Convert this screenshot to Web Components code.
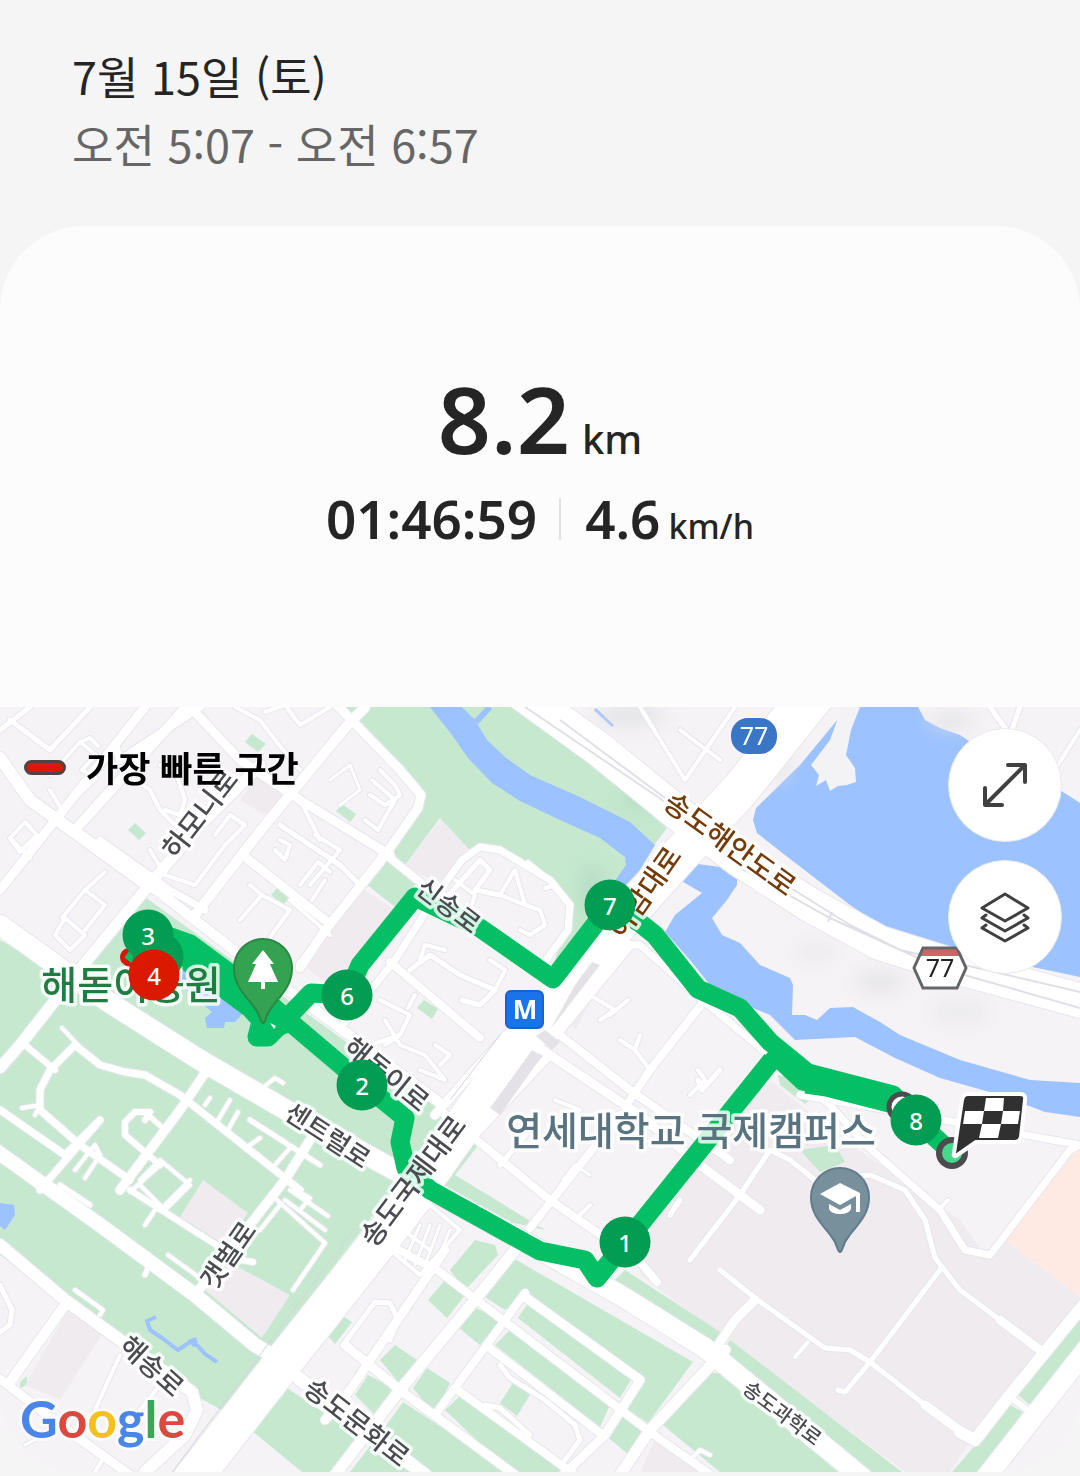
<!DOCTYPE html>
<html lang="ko">
<head>
<meta charset="utf-8">
<meta name="viewport" content="width=device-width, initial-scale=1">
<title>걷기 기록</title>
<style>
body{margin:0;background:#f5f5f5;color:#252525;font-family:"Noto Sans CJK KR","Noto Sans",sans-serif}
</style>
</head>
<body>
<workout-page>
  <workout-header slot="header">
    <span slot="date">7월 15일 (토)</span>
    <span slot="time">오전 5:07 - 오전 6:57</span>
  </workout-header>
  <workout-summary slot="summary">
    <unit-value slot="distance" size="large" unit="km">8.2</unit-value>
    <unit-value slot="stats">01:46:59</unit-value>
    <unit-value slot="stats" unit="km/h">4.6</unit-value>
  </workout-summary>
  <route-map slot="map">
    <map-pin x="263" y="1025" kind="park"></map-pin>
    <map-pin x="840" y="1254" kind="school"></map-pin>
    <km-marker x="158" y="957"></km-marker>
    <km-marker x="148" y="935">3</km-marker>
    <km-marker x="154" y="975" fastest>4</km-marker>
    <km-marker x="347" y="995">6</km-marker>
    <km-marker x="362" y="1085">2</km-marker>
    <km-marker x="610" y="905">7</km-marker>
    <km-marker x="625" y="1242">1</km-marker>
    <km-marker x="916" y="1120">8</km-marker>
    <map-legend slot="legend">가장 빠른 구간</map-legend>
    <round-button slot="controls" label="지도 확대" icon="expand"></round-button>
    <round-button slot="controls" label="지도 유형" icon="layers"></round-button>
    <google-logo slot="logo"></google-logo>
  </route-map>
</workout-page>

<script>
const define = (name, html, setup) => customElements.define(name, class extends HTMLElement {
  connectedCallback() {
    if (this.shadowRoot) return;
    const root = this.attachShadow({ mode: 'open' });
    root.innerHTML = typeof html === 'function' ? html(this) : html;
    if (setup) setup(this, root);
  }
});

define('workout-page', `
<style>
:host{display:flex;flex-direction:column;min-height:100vh;background:#f5f5f5}
</style>
<slot name="header"></slot>
<main><slot name="summary"></slot><slot name="map"></slot></main>`);

define('workout-header', `
<style>
:host{display:block;padding:42px 72px 48px}
h1,p{margin:0;font-size:45px;line-height:68px;font-weight:400}
p{color:#666}
</style>
<h1><slot name="date"></slot></h1>
<p><slot name="time"></slot></p>`);

define('workout-summary', `
<style>
:host{display:flex;flex-direction:column;align-items:center;gap:8px;background:#fcfcfc;border-radius:84px 84px 0 0;padding:132px 24px 155px}
.stats{display:flex;align-items:baseline}
::slotted([slot=stats]:not(:last-child)){padding-right:24px;margin-right:24px;background:linear-gradient(#e2e2e2,#e2e2e2) right 12px/2px 42px no-repeat}
</style>
<slot name="distance"></slot>
<div class="stats"><slot name="stats"></slot></div>`);

define('unit-value', el => `
<style>
:host{display:flex;align-items:baseline;gap:8px;font-family:"Noto Sans",sans-serif;font-weight:600;font-size:53px;line-height:66px;color:#252525}
.unit{font-size:34px;line-height:48px;font-weight:500}
:host([size=large]){font-size:93px;line-height:120px;gap:12px}
:host([size=large]) .unit{font-size:40px}
</style>
<span><slot></slot></span>${el.getAttribute('unit') ? `<span class="unit">${el.getAttribute('unit')}</span>` : ''}`);

/* Map geometry: x,y pairs in map units */
const P = a => 'M' + a.trim().split(/\s+/).join('L');
const polys = (color, list) => list.map(a => `<path fill="${color}" d="${P(a)}Z"/>`).join('');

const greens = [
 '345,707 522,707 667,828 628,880 570,952 555,960 572,900 545,880 490,845 470,850 440,818 405,865 415,885 395,907 366,884 420,806 418,785',
 '0,940 60,975 80,960 145,897 235,962 330,1030 440,1110 480,1143 455,1175 545,1230 480,1215 400,1180 270,1350 225,1412 150,1370 60,1300 0,1255',
 '475,1240 495,1245 498,1255 465,1290 450,1270','513,1258 693,1362 648,1423 620,1405 642,1380 525,1295 505,1310 485,1297',
 '523,1310 530,1302 632,1378 620,1398 518,1318','510,1330 610,1405 600,1427 495,1345','458,1327 470,1305 500,1320 480,1345',
 '428,1300 445,1280 465,1295 447,1318','380,1360 395,1345 417,1360 400,1384','413,1388 427,1368 450,1383 435,1415',
 '355,1395 368,1375 393,1388 375,1415','388,1423 403,1402 510,1472 350,1472','445,1410 460,1396 570,1472 510,1472',
 '500,1403 513,1383 530,1395 517,1416','605,1435 620,1415 643,1433 628,1454','608,1287 625,1270 720,1332 711,1347',
 '663,1425 708,1372 730,1375 865,1472 720,1472','730,1340 902,1472 850,1472 720,1355','245,1425 275,1380 350,1430 372,1440 330,1472 302,1472',
 '318,1325 333,1310 352,1322 335,1344','1080,1315 1018,1395 1030,1405 1080,1345','1010,1405 952,1472 978,1472 1023,1412',
 '245,742 252,734 266,744 258,752','128,830 135,823 146,833 139,840','336,811 342,804 356,814 350,822','271,895 277,888 290,897 283,905',
 '417,1008 424,1000 438,1009 432,1019','20,1382 27,1376 27,1385 20,1388','778,1075 785,1076 815,1095 805,1104 780,1085','800,1150 835,1145 845,1162 820,1172'];
const blocks = [
 '770,1080 830,1130 960,1220 985,1255 1005,1240 1080,1297 1080,1312 970,1442 950,1472 905,1472 640,1275 640,1240',
 '240,800 262,770 288,790 265,815',
 '405,865 442,818 472,843 440,885','300,962 360,887 398,912 340,995','640,1472 655,1440 700,1472','560,995 580,960 600,985 575,1030'];
const blocksOverGreen = ['180,1217 203,1180 248,1213 225,1245','205,1290 225,1260 290,1295 262,1338','25,1385 68,1310 103,1333 60,1400'];
const water = [
 '430,707 462,707 475,720 487,740 505,757 530,775 580,797 630,822 655,845 640,870 626,885 612,885 626,865 625,857 600,838 560,820 520,801 492,783 468,758 452,735',
 '848,707 918,707 925,720 940,728 960,735 975,745 1060,790 1080,803 1080,977 1000,960 930,944 883,927 850,905 785,855 757,833 753,820 756,808 800,765',
 '683,862 720,867 737,873 737,885 727,900 712,918 722,935 740,943 760,965 790,978 793,985 792,1015 805,1015 817,1020 830,1008 853,1007 880,1022 900,1035 960,1060 1030,1080 1080,1083 1080,1117 1045,1112 1000,1095 940,1078 895,1058 855,1037 795,1040 770,1015 740,1003 710,985 690,960 665,932 675,915 702,893 680,880',
 '183,962 205,970 248,1008 235,1022 225,1022 224,1028 207,1028 205,1018 212,1012 180,985','0,1203 14,1205 15,1215 5,1230 0,1226'];

/* [width, points] */
const roads = [
 [5,'0,730 30,707'],[5,'10,720 50,750 90,707'],[4,'50,775 80,742 96,755 82,770 96,778 62,810 50,790'],[4,'80,742 90,738 98,746'],
 [4,'10,838 25,822 37,835 20,852 10,838 30,858'],[4,'160,765 175,770 185,800 180,815 165,810'],
 [4,'150,850 165,875 195,885 225,845 245,825 230,815 215,835'],[4,'120,770 150,790 160,810 180,830'],[4,'55,935 70,950 85,935 65,918 55,935'],
 [4,'62,918 85,890 105,905 85,930'],[4,'85,890 105,872'],[4,'235,707 260,720 275,740 300,770'],[4,'265,712 285,705 300,725 330,707'],[5,'280,825 340,865 360,885'],
 [4,'300,800 320,840'],[4,'315,835 340,850 310,885'],[4,'325,855 345,870'],[4,'275,850 285,860 290,845 280,840'],[4,'240,920 262,895 290,910 275,930 262,950'],[4,'262,895 250,885'],[4,'290,900 330,935'],
 [3,'330,780 350,765 360,790 340,805'],[4,'372,780 395,800 378,830 365,820'],[4,'380,770 395,785 400,795 385,805 370,795'],
 [4,'300,885 318,862 330,872'],[4,'312,900 325,880'],
 [5,'440,905 480,860 490,870 475,890 500,895'],[4,'455,880 475,895 470,910'],[4,'500,895 515,870 525,905 500,895'],[4,'525,905 540,910 545,925 530,935 520,930'],[4,'528,862 556,885 545,888'],
 [5,'410,970 430,955 460,975 495,990 480,1005 462,1000'],[4,'420,960 425,945 445,950'],[4,'495,990 505,970 490,960'],[4,'380,1000 410,1015 400,1035 385,1045'],[4,'385,1020 400,1045 425,1055 445,1080 420,1070'],
 [4,'435,1045 450,1055 440,1065'],[4,'400,1035 370,1045'],[4,'408,1008 415,995'],[4,'590,995 615,1010 600,1020'],[4,'610,1015 628,1000'],[4,'620,1040 635,1050 640,1035'],[4,'635,1050 650,1070'],
 [4,'690,1095 705,1080 698,1070'],[4,'560,1130 580,1110 555,1100'],[3,'563,1180 575,1165 590,1175'],[4,'580,1215 590,1205'],
 [7,'75,1045 100,1065 125,1072 145,1075 180,1095 300,1190'],[7,'75,1045 50,1070 40,1090 40,1110 80,1145 130,1180'],[4,'62,1028 78,1045'],[4,'22,1108 40,1105 35,1115'],
 [6,'145,1120 150,1112 135,1112 125,1122 125,1135 160,1165'],[5,'145,1112 165,1130'],[6,'25,1045 55,1070'],[4,'75,1170 95,1145 100,1155 85,1178'],[4,'100,1160 120,1175'],[4,'140,1180 160,1160 190,1185 165,1210 140,1185'],
 [4,'205,1105 210,1098'],[4,'217,1122 230,1100'],[4,'228,1130 238,1112'],[4,'260,1090 275,1078 283,1083'],[4,'250,1145 260,1138'],[4,'275,1165 290,1148'],[5,'60,1185 90,1205'],
 [5,'250,1120 320,1165'],[7,'0,1110 65,1155 100,1120 70,1155 40,1190'],[6,'130,1190 240,1260 253,1262'],[4,'130,1192 160,1165'],[4,'165,1205 190,1180'],[4,'145,1225 155,1210'],[4,'168,1255 200,1278'],[5,'145,1275 150,1262'],
 [4,'277,1200 325,1243 293,1290'],[4,'285,1200 325,1230'],[4,'290,1190 328,1216'],[4,'295,1190 310,1198 300,1210'],[4,'260,1230 280,1205'],
 [4,'75,1290 103,1310 100,1315'],[5,'0,1285 12,1310 10,1325 0,1332'],[4,'120,1355 95,1410'],[4,'160,1385 140,1410'],[4,'95,1472 105,1455'],[3,'25,1445 35,1440 60,1420'],
 [4,'400,1235 430,1205 460,1230 420,1275 390,1250'],[4,'410,1235 430,1250'],[3,'420,1225 405,1260'],[3,'430,1225 415,1265'],[3,'440,1225 425,1265'],[3,'450,1230 435,1265'],
 [5,'343,1345 375,1302 390,1303 398,1320 390,1340'],[5,'500,1365 510,1378 545,1400 575,1425'],[5,'575,1425 580,1440 565,1460'],[5,'485,1405 500,1408 530,1435'],
 [4,'690,1460 700,1450 710,1455'],[5,'670,1215 680,1200'],[5,'720,1270 755,1298 825,1348 850,1350 870,1362 925,1405'],[5,'940,1270 870,1362 845,1392 838,1390'],[4,'808,1342 795,1357'],
 [9,'755,1300 735,1320 710,1357'],[5,'690,1260 740,1195 770,1150 790,1160 815,1180 870,1175 905,1190 925,1220 935,1258 960,1290 1000,1320'],[9,'1000,1320 1040,1350'],[9,'925,1405 970,1438'],[4,'940,1208 948,1200'],
 [8,'300,965 360,885 385,853'],[10,'75,830 190,703'],[10,'195,915 265,825 345,728 365,707'],[9,'335,703 400,770 421,795 418,808 380,862 325,930 300,968'],
 [9,'245,857 325,920'],[8,'75,830 170,895'],[9,'190,707 240,760 300,800 390,855'],[9,'0,890 145,707'],[7,'205,910 170,890 100,840'],[8,'200,707 120,760 115,745'],
 [8,'380,850 480,930 555,980'],[7,'440,890 462,860 480,847 500,850 550,880 570,905 568,930 540,968'],[8,'390,962 480,1038'],[9,'590,945 470,1075 435,1115'],[7,'345,1022 395,960 430,905'],
 [9,'630,945 556,1035'],[9,'535,1045 640,1115 700,1165 760,1210'],[8,'560,1035 630,1090 730,1160'],[8,'705,1000 650,1070 630,1100'],[8,'550,1055 470,1140'],[5,'720,1070 702,1090 698,1080'],
 [7,'590,980 625,945 640,945 700,998 775,1060 830,1105 866,1145 940,1210 965,1250 990,1255 1070,1150 1080,1145'],[7,'1080,1145 900,1112 800,1095'],
 [8,'440,1110 550,1200 640,1262 657,1282'],[8,'530,1228 560,1190 620,1115'],[5,'500,1165 530,1130'],
 [10,'150,885 240,955 340,1028 440,1103'],[12,'0,758 30,800 150,887'],[11,'260,765 200,825 145,890 75,975 20,1045 0,1068'],[9,'207,1070 180,1110 120,1190'],
 [9,'310,1140 285,1180 195,1295'],[14,'-5,1150 30,1175 100,1225 195,1295 255,1345 280,1360'],[12,'0,1245 65,1300 120,1340 155,1365 192,1392 197,1410 185,1435 145,1472'],[10,'65,1305 10,1382'],[9,'-5,1375 60,1425 130,1475'],
 [13,'275,1360 340,1410 425,1475'],[11,'515,1250 475,1300 400,1390 335,1475'],[9,'445,1250 350,1390 325,1420'],[8,'380,1240 440,1272 500,1318 650,1432 715,1478'],[8,'525,1293 435,1415'],[9,'345,1345 400,1390 515,1475'],
 [9,'525,1297 640,1380 605,1435 560,1478'],[8,'487,1346 600,1433'],[8,'455,1388 575,1475'],[11,'725,1350 650,1430 620,1475'],[12,'1085,1303 1010,1395 975,1440 960,1432'],[20,'1090,1345 980,1485'],[6,'1010,1397 1032,1413'],
 [20,'0,925 60,968 110,1003 200,1060 300,1118 400,1173 540,1250 620,1295 705,1348 865,1480'],
 [8,'780,707 745,750'],[4,'640,707 685,780 735,707'],[4,'680,730 720,760'],[5,'990,707 1010,735 1020,707'],[4,'1080,730 1055,770'],
 [34,'520,692 600,750 680,815 740,860 810,905 880,943 960,968 1085,1002'],
 [38,'820,690 740,790 680,855 600,945 520,1045 400,1215 285,1360 190,1482']];
const casing = roads.map(([w, a]) => `<path stroke-width="${w + 2}" d="${P(a)}"/>`).join('');
const fill = roads.map(([w, a]) => `<path stroke-width="${w}" d="${P(a)}"/>`).join('');

const label = (text, x, y, angle, size, cls = '') =>
  `<text class="${cls}" font-size="${size}" transform="translate(${x} ${y}) rotate(${angle})" dy="10">${text}</text>`;

define('route-map', `
<style>
:host{display:block;position:relative;overflow:hidden;border-radius:0 0 80px 80px;background:#f6f3f7}
svg{display:block;width:100%;height:auto}
text{text-anchor:middle;fill:#4a4c52;font-weight:500;stroke:rgba(255,255,255,.82);stroke-width:7px;stroke-linejoin:round;paint-order:stroke;font-family:"Noto Sans CJK KR",sans-serif}
.coast{fill:#743c08}.park{fill:#1f7d42}.campus{fill:#5a7380}
.badge{stroke:none;font-weight:400;font-family:"Noto Sans",sans-serif}
.bold{font-weight:700}
.legend{position:absolute;top:34px;left:24px}
.controls{position:absolute;top:21px;right:18px;display:flex;flex-direction:column;gap:18px}
.logo{position:absolute;left:20px;bottom:22px}
</style>
<svg viewBox="0 707 1080 765" role="img" aria-label="경로 지도">
  <defs><filter id="soft" x="-50%" y="-50%" width="200%" height="200%"><feGaussianBlur stdDeviation="9"/></filter></defs>
  <rect y="707" width="1080" height="765" fill="#f6f3f7"/>
  ${polys('#efebef', blocks)}
  ${polys('#c5e8cf', greens)}
  ${polys('#efebef', blocksOverGreen)}
  ${polys('#ffeae3', ['1080,1145 1005,1240 1080,1297'])}
  ${polys('#9cc2ff', water)}
  <path fill="#f3f2f5" d="${P('842,707 860,707 851,730 846,755 855,768 856,782 847,785 838,786 830,791 826,780 816,786 819,775 811,765 830,740')}Z"/>
  <g fill="none" stroke="#9cc2ff"><path stroke-width="6" d="M476,722L490,707"/><path stroke-width="3" d="M595,709L613,726"/>
  <path stroke-width="4" d="M156,1317L147,1321 150,1330 162,1338 178,1350 190,1342 198,1346 205,1354 217,1362"/></g>
  <path fill="#9cc2ff" d="M188,1340l8,-3 2,6 -5,4z"/>
  <g filter="url(#soft)" fill="#dcdde0" opacity=".75"><ellipse cx="880" cy="982" rx="24" ry="9"/><ellipse cx="815" cy="952" rx="20" ry="8" opacity=".6"/><ellipse cx="960" cy="1012" rx="30" ry="12" opacity=".5"/><ellipse cx="630" cy="715" rx="35" ry="10"/><ellipse cx="950" cy="722" rx="24" ry="8"/><ellipse cx="780" cy="765" rx="12" ry="20" opacity=".6"/></g>
  <g filter="url(#soft)" fill="#a9cdb8" opacity=".5"><ellipse cx="640" cy="800" rx="20" ry="8"/><ellipse cx="592" cy="890" rx="10" ry="24"/></g>
  <g fill="none" stroke="#e7e6ed" stroke-linejoin="round" stroke-linecap="round">${casing}</g>
  <g fill="none" stroke="#fff" stroke-linejoin="round" stroke-linecap="round">${fill}</g>
  ${polys('#e4e2e6', ['490,1108 532,1050 542,1056 500,1115','550,1030 600,965 592,962 575,985','536,1036 545,1030 560,1042 552,1050'])}
  <g fill="none" stroke="#e0dfe7" stroke-width="2"><path d="M525,707L655,795 665,802M560,720L665,798 M740,868L830,918 940,968 1080,1008M770,875L850,925 900,950 1080,992M832,912L828,922"/><path stroke="#d3d5dc" stroke-width="1" d="M355,1228L170,1475M500,1035L450,1100"/></g>
  <path fill="none" stroke="#d8160c" stroke-width="18" stroke-linecap="round" d="M129,957L150,975"/>
  <g fill="none" stroke="#04bf64" stroke-width="19" stroke-linejoin="round">
    <path d="M130,950L150,965M165,935L190,944 262,997 290,1022 362,1083 405,1118 400,1142 406,1168 430,1190 540,1251 585,1260 597,1278 625,1243 772,1060"/>
    <path d="M952,1153L916,1120 893,1095 808,1073 770,1042 740,1008 698,989 655,935 640,923 610,905 553,979 480,928 415,897 360,965 347,995 311,993 285,1020 268,1037 257,1037 262,1018"/>
    <path d="M770,1050L803,1081 893,1104M806,1084L890,1096M165,945L250,1008 270,1030 295,1020"/>
  </g>
  <path fill="#fff" d="M270,1023l6,3 -2,3z"/>
  ${label('하모니로',200,814,-52,28)}
  ${label('신송로',449,905,37,26)}
  ${label('해돋이로',387,1074,39,27)}
  ${label('센트럴로',328,1135,33,26)}
  ${label('송도국제대로',413,1181,-53,28)}
  ${label('갯벌로',228,1255,-55,27)}
  ${label('해송로',152,1366,42,27)}
  ${label('송도문화로',357,1422,38,27)}
  ${label('송도과학로',784,1411,37,20)}
  ${label('송도해안도로',730,844,36,28,'coast')}
  ${label('아암대로',645,892,-55,28,'coast')}
  ${label('해돋이공원',131,989,0,39,'park')}
  ${label('연세대학교 국제캠퍼스',691,1135,0,39,'campus')}
  <rect x="731" y="718" width="46" height="36" rx="17" fill="#3a76c6"/>
  <text class="badge" x="754" y="745" font-size="25" style="fill:#fff">77</text>
  <path fill="#fff" d="M923,948H957L966,968 957,988H923L914,968Z"/><path fill="#cf6464" d="M922,949H958L962,956H918Z"/>
  <path fill="none" stroke="#65666a" stroke-width="3" d="M923,948H957L966,968 957,988H923L914,968Z"/>
  <text class="badge" x="940" y="977" font-size="25" style="fill:#222">77</text>
  <rect x="506" y="991" width="37" height="37" rx="5" fill="#1a73e8" stroke="#1864c8" stroke-width="2"/>
  <text class="badge bold" x="525" y="1019" font-size="26" style="fill:#fff">M</text>
  <circle cx="902" cy="1107" r="13" fill="#fff" stroke="#4c4c4e" stroke-width="5"/>
  <circle cx="952" cy="1153" r="13" fill="#45d98b" stroke="#4c4c4e" stroke-width="6"/>
  <g stroke-linejoin="round"><path d="M968,1094H1020Q1026,1094 1025,1100L1021,1137Q1020,1142 1015,1142H976L956,1156Q953,1157 954,1153L962,1100Q963,1094 968,1094Z" fill="#303030" stroke="#fff" stroke-width="4"/>
  <path fill="#fff" d="M986,1098H1004L1003,1111H984ZM965,1111H984L982,1124H963ZM1003,1111H1020L1018,1124H1001ZM982,1124H1001L998,1138H979Z"/></g>
</svg>
<slot></slot>
<div class="legend"><slot name="legend"></slot></div>
<div class="controls"><slot name="controls"></slot></div>
<div class="logo"><slot name="logo"></slot></div>`);

/* Places an element on the map by its map units */
const place = el => {
  el.style.left = `calc(${el.getAttribute('x')} / 1080 * 100%)`;
  el.style.top = `calc((${el.getAttribute('y')} - 707) / 765 * 100%)`;
};

define('km-marker', `
<style>
:host{position:absolute;display:flex;align-items:center;justify-content:center;width:51px;height:51px;border-radius:50%;transform:translate(-50%,-50%);background:#029c52;color:#fff;font:500 24px/32px "Noto Sans",sans-serif}
:host([fastest]){background:#db1800}
</style><slot></slot>`, place);

define('map-pin', el => `
<style>
:host{position:absolute;display:block;width:62px;height:88px;transform:translate(-50%,-100%)}
svg{display:block}
</style>
<svg width="62" height="88" viewBox="0 0 62 88">
${el.getAttribute('kind') === 'park'
 ? `<path d="M31,86C28,86 29,78 22,70C13,58 2,49 2,31A29,29 0 0 1 60,31C60,49 49,58 40,70C33,78 34,86 31,86Z" fill="#34a351" stroke="#2a8744" stroke-width="2"/><path fill="#fff" d="M31,13L42,27H38L46,45H33V52H29V45H16L24,27H20Z"/>`
 : `<path d="M31,86C28,86 29,78 22,70C13,58 2,49 2,31A29,29 0 0 1 60,31C60,49 49,58 40,70C33,78 34,86 31,86Z" fill="#78909c" stroke="#607d8b" stroke-width="2"/><path fill="#fff" d="M31,17L51,27V46H47V30L31,39 11,28ZM20,38L31,44 42,38V43Q40,48 31,48T20,43Z"/>`}
</svg>`, place);

define('map-legend', `
<style>
:host{display:flex;align-items:center;gap:20px;font-size:35px;line-height:52px;font-weight:700;color:#000}
i{box-sizing:border-box;width:42px;height:15px;border:3px solid #4f4343;border-radius:8px;background:#db1800}
</style><i></i><span><slot></slot></span>`);

const icons = {
  expand: '<path d="M8,46L46,8M30,7H47V24M7,30V47H24"/>',
  layers: '<path stroke-width="3" d="M27,4L50,18 27,31 4,18ZM8,25L4,28 27,41 50,28 46,25M8,35L4,38 27,51 50,38 46,35"/>'
};
define('round-button', el => `
<style>
:host{display:block}
button{display:flex;align-items:center;justify-content:center;width:114px;height:114px;padding:0;border:1px solid #e8e9ec;border-radius:50%;background:#fff;cursor:pointer}
svg{fill:none;stroke:#404040;stroke-width:4;stroke-linecap:round;stroke-linejoin:round}
</style>
<button type="button" aria-label="${el.getAttribute('label')}"><svg width="54" height="54" viewBox="0 0 54 54">${icons[el.getAttribute('icon')]}</svg></button>`);

define('google-logo', `
<style>
:host{display:block;font:700 52px/64px Lato,sans-serif;paint-order:stroke;-webkit-text-stroke:6px rgba(255,255,255,.6)}
.b{color:#4a86e8}.r{color:#db4a3f}.y{color:#f4c020}.g{color:#3aa757}
</style>
<span class="b">G</span><span class="r">o</span><span class="y">o</span><span class="b">g</span><span class="g">l</span><span class="r">e</span>`);
</script>
</body>
</html>
